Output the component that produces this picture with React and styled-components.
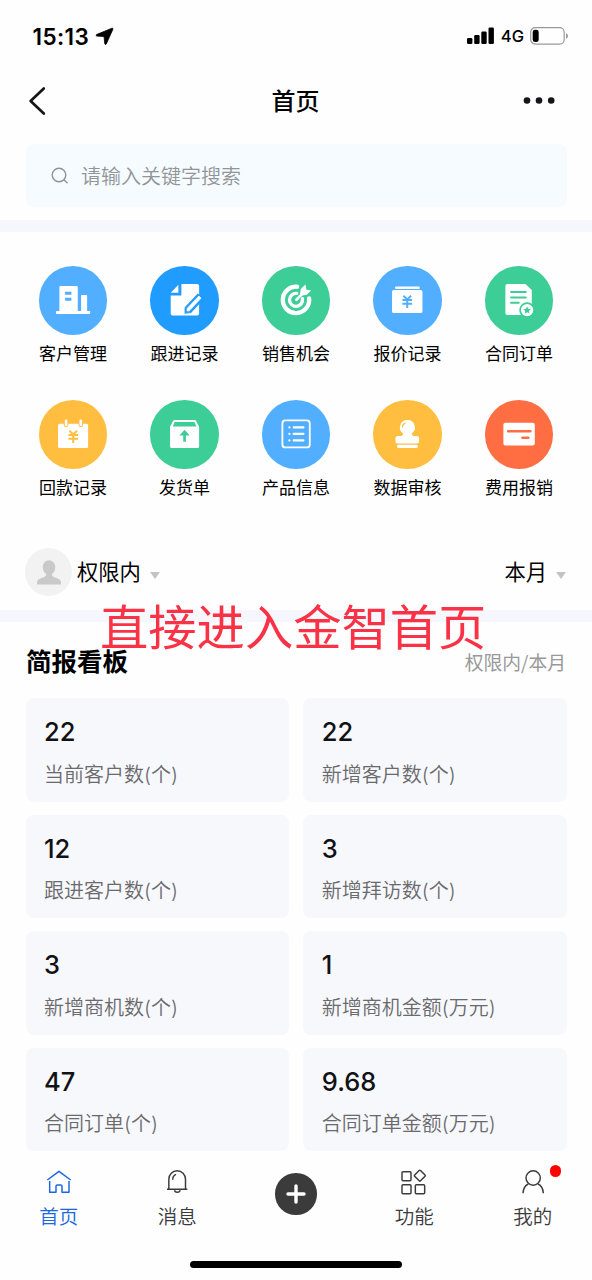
import React from "react";
import styled, { createGlobalStyle } from "styled-components";

const BLUE = "#52afff";
const DEEP_BLUE = "#209cff";
const GREEN = "#3dcd96";
const YELLOW = "#ffbe40";
const ORANGE = "#ff6e42";

const YenMark = ({ color, y = 0 }) => (
  <path
    d={`M91 ${90 + y}L102.500 ${101 + y}L114 ${90 + y}M88 ${103 + y}H117M88 ${114 + y}H117M102.500 ${101 + y}V${127 + y}`}
    fill="none"
    stroke={color}
    strokeWidth="6"
  />
);

const CustomerIcon = () => (
  <g fill="#fff">
    <path d="M64 60H113a3 3 0 0 1 3 3V135H61V63a3 3 0 0 1 3-3Z" />
    <rect x="126" y="87" width="18" height="50" rx="2" />
    <rect x="51" y="135" width="102" height="9" rx="1" />
    <path d="M78 77H97V86H78ZM78 95H97V104H78Z" fill={BLUE} />
  </g>
);

const FollowIcon = () => (
  <g>
    <path
      d="M94 54H141a6 6 0 0 1 6 6V142a6 6 0 0 1-6 6H67a5 5 0 0 1-5-5V88H94Z"
      fill="#fff"
    />
    <path d="M85 56V80H62Z" fill="#fff" />
    <path
      d="M105 141V125L143 84L160 98L122 139Z"
      fill={DEEP_BLUE}
      stroke={DEEP_BLUE}
      strokeWidth="3"
    />
    <path
      d="M111 135V127L146 90L153 96L118 134Z"
      fill="#fff"
      stroke="#fff"
      strokeWidth="2"
      strokeLinejoin="round"
    />
  </g>
);

const ChanceIcon = () => (
  <g fill="none" stroke="#fff">
    <path d="M105 62A39.500 39.500 0 1 0 141 97" strokeWidth="13" strokeLinecap="round" />
    <path d="M104 82A19.500 19.500 0 1 0 121 98" strokeWidth="10" strokeLinecap="round" />
    <path d="M103 101L128 76" strokeWidth="8" strokeLinecap="round" />
    <path d="M114 84L116 69L130 55L133 71L147 73L134 86L120 88Z" fill="#fff" stroke="none" />
  </g>
);

const QuoteIcon = () => (
  <g>
    <rect x="66" y="61" width="74" height="8" rx="3" fill="#fff" />
    <rect x="57" y="72" width="91" height="69" rx="5" fill="#fff" />
    <YenMark color={BLUE} y={-1} />
  </g>
);

const ContractIcon = () => (
  <g>
    <path d="M67 54H121L140 72V141a6 6 0 0 1-6 6H67a6 6 0 0 1-6-6V60a6 6 0 0 1 6-6Z" fill="#fff" />
    <path
      d="M78 78H122M78 94H122M78 110H101"
      stroke={GREEN}
      strokeWidth="6"
      strokeLinecap="round"
    />
    <circle cx="126" cy="132" r="21" fill="#fff" stroke={GREEN} strokeWidth="5" />
    <path
      d="M126 121L129.500 128L137 129L131.500 134.500L133 142L126 138.500L119 142L120.500 134.500L115 129L122.500 128Z"
      fill={GREEN}
    />
  </g>
);

const PaymentIcon = () => (
  <g>
    <rect x="57" y="71" width="90" height="73" rx="5" fill="#fff" />
    <rect x="75.500" y="56.500" width="11" height="23" rx="5.500" fill="#fff" stroke={YELLOW} strokeWidth="3" />
    <rect x="119.500" y="56.500" width="11" height="23" rx="5.500" fill="#fff" stroke={YELLOW} strokeWidth="3" />
    <YenMark color={YELLOW} y={2} />
  </g>
);

const DeliveryIcon = () => (
  <g>
    <path d="M60 80L69 63a5 5 0 0 1 4-3H134a5 5 0 0 1 4 3L147 80V139a5 5 0 0 1-5 5H65a5 5 0 0 1-5-5Z" fill="#fff" />
    <path d="M74 66H133L139 79H68Z" fill={GREEN} />
    <path d="M103.500 89L119 106H107.500V125H99.500V106H88Z" fill={GREEN} />
  </g>
);

const ProductIcon = () => (
  <g fill="none" stroke="#fff" strokeLinecap="round">
    <rect x="61" y="61" width="82" height="81" rx="9" strokeWidth="5.500" />
    <path
      d="M82 82H82.100M82 101.500H82.100M82 121H82.100M95 82H124M95 101.500H124M95 121H124"
      strokeWidth="6.500"
    />
  </g>
);

const AuditIcon = () => (
  <g fill="#fff">
    <path d="M103 60a22 22 0 0 1 13 40Q115 107 122 108H131a7 7 0 0 1 7 7V124a6 6 0 0 1-6 6H73a6 6 0 0 1-6-6V115a7 7 0 0 1 7-7H84Q91 107 90 100A22 22 0 0 1 103 60Z" />
    <rect x="72" y="134" width="62" height="10" rx="4" />
    <path d="M88 80Q89 72 96 69" fill="none" stroke={YELLOW} strokeWidth="4" strokeLinecap="round" />
  </g>
);

const ExpenseIcon = () => (
  <g>
    <rect x="55" y="68" width="94" height="68" rx="6" fill="#fff" />
    <path d="M69 93.500H136M112 113H130" stroke={ORANGE} strokeWidth="7.500" strokeLinecap="round" />
  </g>
);

const shortcuts = [
  { title: "客户管理", color: BLUE, Icon: CustomerIcon },
  { title: "跟进记录", color: DEEP_BLUE, Icon: FollowIcon },
  { title: "销售机会", color: GREEN, Icon: ChanceIcon },
  { title: "报价记录", color: BLUE, Icon: QuoteIcon },
  { title: "合同订单", color: GREEN, Icon: ContractIcon },
  { title: "回款记录", color: YELLOW, Icon: PaymentIcon },
  { title: "发货单", color: GREEN, Icon: DeliveryIcon },
  { title: "产品信息", color: BLUE, Icon: ProductIcon },
  { title: "数据审核", color: YELLOW, Icon: AuditIcon },
  { title: "费用报销", color: ORANGE, Icon: ExpenseIcon },
];

const stats = [
  { value: "22", title: "当前客户数(个)" },
  { value: "22", title: "新增客户数(个)" },
  { value: "12", title: "跟进客户数(个)" },
  { value: "3", title: "新增拜访数(个)" },
  { value: "3", title: "新增商机数(个)" },
  { value: "1", title: "新增商机金额(万元)" },
  { value: "47", title: "合同订单(个)" },
  { value: "9.68", title: "合同订单金额(万元)" },
];

const HomeIcon = () => (
  <>
    <path d="M10 39L45 13L80 39" />
    <path d="M17 42V76H36V58Q36 54 40 54H50Q54 54 54 58V76H75V42" />
  </>
);

const BellIcon = () => (
  <>
    <path d="M20.500 66V37a25 25.500 0 0 1 50 0V66" />
    <path d="M15 66.500H76M38 70a8 6 0 0 0 16 0M32 38Q32 26 42 22" />
  </>
);

const ModulesIcon = () => (
  <>
    <rect x="9" y="14" width="27" height="27" rx="3" />
    <rect x="9" y="53" width="27" height="27" rx="3" />
    <rect x="49" y="53" width="28" height="27" rx="3" />
    <path d="M60.500 10.500Q62.500 8.500 64.500 10.500L78 24Q80 26 78 28L64.500 41.500Q62.500 43.500 60.500 41.500L47 28Q45 26 47 24Z" />
  </>
);

const PersonIcon = () => (
  <>
    <circle cx="45.500" cy="33" r="21.500" />
    <path d="M15 79Q16 58 31 51M60 51Q75 58 76 79" />
  </>
);

const Tab = ({ title, Icon, active, badge }) => (
  <StyledTab $active={active}>
    <StyledTabIcon viewBox="0 0 90 90">
      <Icon />
    </StyledTabIcon>
    {title}
    {badge && <StyledBadge />}
  </StyledTab>
);

const App = () => (
  <StyledScreen>
    <GlobalStyle />
    <StyledStatusBar>
      <StyledTime>
        15:13
        <svg width="19" height="19" viewBox="0 0 19 19">
          <path
            d="M17 1.200L1.500 7.600Q.4 8.400 1.700 9L9 9.600L9.800 16.900Q10.400 18.200 11.300 17L17.900 2.200Q18.100 .9 17 1.200Z"
            fill="#000"
            stroke="#000"
            strokeWidth="0.800"
          />
        </svg>
      </StyledTime>
      <StyledSignals>
        <svg width="28" height="18" viewBox="0 0 28 18">
          <rect x="0" y="11" width="5.400" height="6" rx="1.300" />
          <rect x="7.200" y="8" width="5.400" height="9" rx="1.300" />
          <rect x="14.300" y="4.500" width="5.400" height="12.500" rx="1.300" />
          <rect x="21.500" y="0.500" width="5.400" height="16.500" rx="1.300" />
        </svg>
        <span>4G</span>
        <svg width="39" height="18" viewBox="0 0 39 18">
          <rect x="0.700" y="0.700" width="33.500" height="16.400" rx="4.500" fill="none" stroke="#999" strokeWidth="1.200" />
          <rect x="2.700" y="2.700" width="6" height="12.400" rx="2.400" />
          <path d="M36 6.300Q38 7 38 9T36 11.700Z" fill="#999" />
        </svg>
      </StyledSignals>
    </StyledStatusBar>

    <StyledNavBar>
      <svg width="18" height="30" viewBox="0 0 18 30">
        <path
          d="M15.800 2.500L2.600 15L15.800 27.500"
          fill="none"
          stroke="#15151a"
          strokeWidth="2.700"
          strokeLinecap="round"
          strokeLinejoin="round"
        />
      </svg>
      <h1>首页</h1>
      <svg width="32" height="8" viewBox="0 0 32 8" fill="#15151a">
        <circle cx="4" cy="3.500" r="3.300" />
        <circle cx="16" cy="3.500" r="3.300" />
        <circle cx="28.200" cy="3.500" r="3.300" />
      </svg>
    </StyledNavBar>

    <StyledSearch>
      <svg width="18" height="18" viewBox="0 0 18 18" fill="none" stroke="#8e9398" strokeWidth="1.400">
        <circle cx="8" cy="8" r="6.800" />
        <path d="M12.800 12.800L16.600 16.200" />
      </svg>
      请输入关键字搜索
    </StyledSearch>
    <StyledDivider />

    <StyledShortcuts>
      {shortcuts.map(({ title, color, Icon }) => (
        <StyledShortcut key={title}>
          <StyledCircle $color={color}>
            <svg viewBox="0 0 205 205">
              <Icon />
            </svg>
          </StyledCircle>
          {title}
        </StyledShortcut>
      ))}
    </StyledShortcuts>

    <StyledFilters>
      <StyledAvatar>
        <svg width="24" height="25" viewBox="0 0 24 25" fill="#c9c9c9">
          <ellipse cx="12" cy="7.500" rx="6.300" ry="7.300" />
          <path d="M9 12H15V15.500Q16 17 20 18.300Q24 19.500 24 22.500V24.500H0V22.500Q0 19.500 4 18.300Q8 17 9 15.500Z" />
        </svg>
      </StyledAvatar>
      <StyledFilter>权限内</StyledFilter>
      <StyledFilter $end>本月</StyledFilter>
    </StyledFilters>

    <StyledDividerWrap>
      <StyledDivider />
      <StyledCaption>直接进入金智首页</StyledCaption>
    </StyledDividerWrap>

    <StyledBoardHead>
      <h2>简报看板</h2>
      <span>权限内/本月</span>
    </StyledBoardHead>
    <StyledBoard>
      {stats.map(({ value, title }) => (
        <StyledCard key={title}>
          <strong>{value}</strong>
          <span>{title}</span>
        </StyledCard>
      ))}
    </StyledBoard>

    <StyledTabBar>
      <Tab title="首页" Icon={HomeIcon} active />
      <Tab title="消息" Icon={BellIcon} />
      <StyledAdd>
        <svg width="20" height="20" viewBox="0 0 20 20">
          <path d="M10 2V18M2 10H18" stroke="#fff" strokeWidth="3.400" strokeLinecap="round" />
        </svg>
      </StyledAdd>
      <Tab title="功能" Icon={ModulesIcon} />
      <Tab title="我的" Icon={PersonIcon} badge />
    </StyledTabBar>
    <StyledHomeIndicator />
  </StyledScreen>
);

export default App;

const GlobalStyle = createGlobalStyle`
  * {
    box-sizing: border-box;
  }

  body {
    margin: 0;
    background: #fff;
  }

  h1, h2 {
    margin: 0;
  }

  svg {
    display: block;
    flex-shrink: 0;
  }
`;

const StyledScreen = styled.div`
  display: flex;
  flex-direction: column;
  width: 592px;
  height: 1280px;
  overflow: hidden;
  background: #fefefe;
  color: #000;
  font-family: "Noto Sans CJK SC", sans-serif;
`;

const StyledStatusBar = styled.div`
  display: flex;
  align-items: center;
  justify-content: space-between;
  height: 72px;
  padding: 0 23px 0 32.5px;
  font-family: Inter, sans-serif;
`;

const StyledTime = styled.div`
  display: flex;
  align-items: center;
  gap: 5.5px;
  font-size: 22.5px;
  font-weight: 600;
  letter-spacing: 0.4px;
`;

const StyledSignals = styled.div`
  display: flex;
  align-items: center;
  gap: 6px;
  font-size: 16.5px;
  font-weight: 500;
`;

const StyledNavBar = styled.div`
  display: flex;
  align-items: center;
  justify-content: space-between;
  height: 57px;
  padding: 0 37px 0 28px;

  h1 {
    padding: 0 0 2px 22px;
    font-size: 24px;
    font-weight: 500;
    line-height: 36px;
  }
`;

const StyledSearch = styled.div`
  display: flex;
  align-items: center;
  gap: 12.5px;
  height: 63px;
  margin: 15px 25.5px 13px;
  padding-left: 25px;
  border-radius: 8px;
  background: #f5fbff;
  color: #929598;
  font-size: 20px;
  font-weight: 350;
`;

const StyledDivider = styled.div`
  height: 12px;
  flex-shrink: 0;
  background: #f6f7fc;
`;

const StyledShortcuts = styled.div`
  display: grid;
  grid-template-columns: repeat(5, 111.5px);
  grid-auto-rows: 134.3px;
  height: 316px;
  padding: 34px 17.25px 0;
`;

const StyledShortcut = styled.div`
  display: flex;
  flex-direction: column;
  align-items: center;
  gap: 5.2px;
  font-size: 17px;
  line-height: 25px;
`;

const StyledCircle = styled.div`
  width: 68.5px;
  height: 68.5px;
  border-radius: 50%;
  background: ${(props) => props.$color};
`;

const StyledFilters = styled.div`
  display: flex;
  align-items: center;
  height: 48px;
  margin-bottom: 14px;
  padding: 0 26px 0 25px;
`;

const StyledAvatar = styled.div`
  display: flex;
  align-items: center;
  justify-content: center;
  width: 47px;
  height: 48px;
  margin-right: 5px;
  border-radius: 50%;
  background: #f2f2f2;
`;

const StyledFilter = styled.div`
  display: flex;
  align-items: center;
  margin-left: ${(props) => (props.$end ? "auto" : "0")};
  padding-bottom: 3px;
  font-size: 21.3px;

  &::after {
    content: "";
    margin: 9px 0 0 9px;
    border: 5px solid transparent;
    border-top: 7px solid #c4c4c4;
    border-bottom: 0;
  }
`;

const StyledDividerWrap = styled.div`
  position: relative;
`;

/* caption floats over the divider and the board heading */
const StyledCaption = styled.div`
  position: absolute;
  top: -21px;
  left: 100px;
  z-index: 1;
  color: #fa3246;
  font-size: 48.3px;
  line-height: 70px;
  white-space: nowrap;
`;

const StyledBoardHead = styled.div`
  display: flex;
  align-items: center;
  justify-content: space-between;
  height: 76px;
  padding: 2px 26px 0;

  h2 {
    padding-bottom: 4px;
    font-size: 25.5px;
    font-weight: 700;
  }

  span {
    color: #999;
    font-size: 18.8px;
  }
`;

const StyledBoard = styled.div`
  display: grid;
  grid-template-columns: 1fr 1fr;
  grid-auto-rows: 103.6px;
  gap: 13px 14.6px;
  padding: 0 25.5px;
`;

const StyledCard = styled.div`
  display: flex;
  flex-direction: column;
  padding: 16px 18.5px 0;
  border-radius: 8px;
  background: #f7f8fc;

  strong {
    color: #111216;
    font-family: Inter, sans-serif;
    font-size: 25.5px;
    font-weight: 500;
    line-height: 36px;
  }

  span {
    margin-top: 9.5px;
    color: #6a6a6c;
    font-family: Inter, "Noto Sans CJK SC", sans-serif;
    font-size: 20px;
    font-weight: 350;
    line-height: 30px;
  }
`;

const StyledTabBar = styled.div`
  display: grid;
  grid-template-columns: repeat(5, 118.5px);
  height: 109.6px;
  padding-top: 16px;
  margin-left: -0.5px;
`;

const StyledTab = styled.div`
  position: relative;
  display: flex;
  flex-direction: column;
  align-items: center;
  gap: 4px;
  color: ${(props) => (props.$active ? "#1a66e0" : "#3b3b3d")};
  font-size: 19.5px;
  font-weight: 350;
  line-height: 29px;
`;

const StyledTabIcon = styled.svg`
  width: 30px;
  height: 30px;
  fill: none;
  stroke: currentColor;
  stroke-width: 4.4;
  stroke-linejoin: round;
`;

const StyledBadge = styled.i`
  position: absolute;
  top: -2px;
  right: 31px;
  width: 11.4px;
  height: 11.4px;
  border-radius: 50%;
  background: #ff0202;
`;

const StyledAdd = styled.div`
  display: flex;
  align-items: center;
  justify-content: center;
  justify-self: center;
  width: 41.5px;
  height: 41.5px;
  margin-top: 6px;
  border-radius: 50%;
  background: #3b3b3b;
`;

const StyledHomeIndicator = styled.div`
  width: 212px;
  height: 7.5px;
  margin-left: 190px;
  border-radius: 4px;
  background: #000;
`;
